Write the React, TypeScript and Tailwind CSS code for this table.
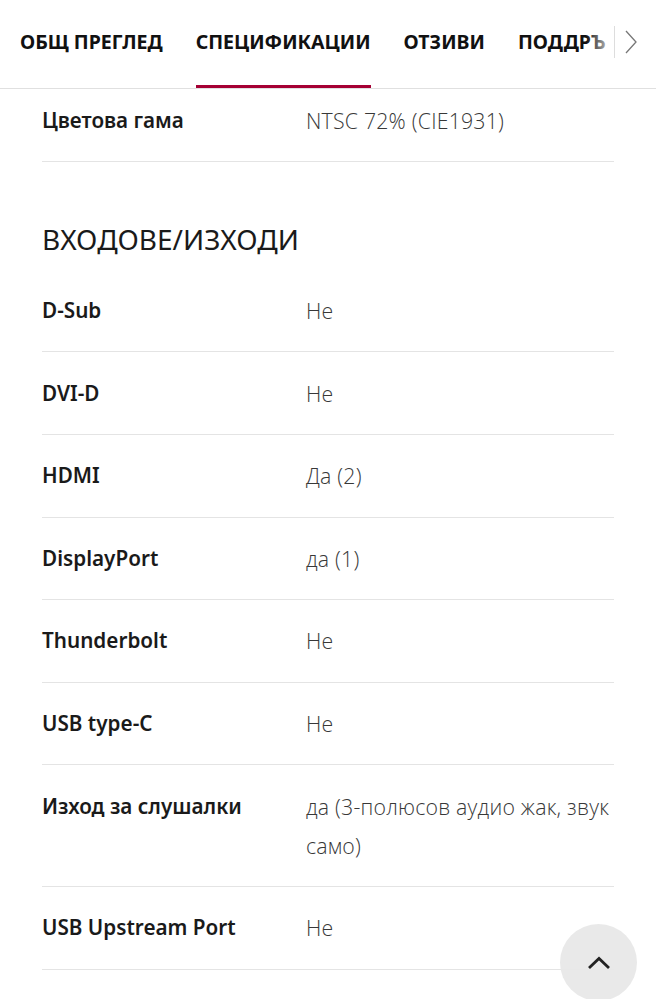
import React from "react";

const rows: [string, string][] = [
  ["D-Sub", "Не"],
  ["DVI-D", "Не"],
  ["HDMI", "Да (2)"],
  ["DisplayPort", "да (1)"],
  ["Thunderbolt", "Не"],
  ["USB type-C", "Не"],
  ["Изход за слушалки", "да (3-полюсов аудио жак, звук само)"],
  ["USB Upstream Port", "Не"],
];

function Row({ label, value, first }: { label: string; value: string; first?: boolean }) {
  return (
    <div
      className={`grid grid-cols-[264px_1fr] border-b border-[#e4e4e4] leading-[39px] ${
        first ? "pt-[11.5px] pb-[21.3px]" : "py-[21.3px]"
      }`}
    >
      <div className="font-semibold text-[20.7px] text-[#1a1a1a]">{label}</div>
      <div
        className="font-light text-[21.3px] text-[#383838] tracking-[0.2px]"
        style={{ fontFamily: '"Open Sans", "Noto Sans", sans-serif' }}
      >
        {value}
      </div>
    </div>
  );
}

export default function App() {
  return (
    <div
      className="w-[656px] h-[999px] bg-white overflow-hidden relative"
      style={{ fontFamily: '"Noto Sans", "Open Sans", sans-serif' }}
    >
      <div className="h-[89px] flex border-b border-[#e0e0e0] bg-white">
        <div className="relative flex-1 overflow-hidden">
          <div className="flex h-full pl-[20px] gap-[33px] whitespace-nowrap text-[19.5px] font-bold text-[#111]">
            <div className="h-full flex items-center pb-[4px]">ОБЩ ПРЕГЛЕД</div>
            <div className="h-full flex items-center pb-[4px] shadow-[inset_0_-3px_0_#a50034]">СПЕЦИФИКАЦИИ</div>
            <div className="h-full flex items-center pb-[4px]">ОТЗИВИ</div>
            <div className="h-full flex items-center pb-[4px]">ПОДДРЪ</div>
          </div>
          <div className="absolute right-0 top-0 h-full w-[28px] bg-gradient-to-r from-white/0 to-white/90" />
        </div>
        <div className="w-[42px] flex items-center">
          <div className="h-[32px] w-px bg-[#dddddd] -mt-[5px]" />
          <div className="flex-1 flex justify-start pl-[10px] -mt-[5px]">
            <svg width="12" height="24" viewBox="0 0 12 24" fill="none">
              <path d="M1 1 L11 12 L1 23" stroke="#777" strokeWidth="1.3" />
            </svg>
          </div>
        </div>
      </div>

      <div className="mx-[42px]">
        <Row label="Цветова гама" value="NTSC 72% (CIE1931)" first />
        <h2 className="pt-[59px] pb-[12px] text-[28px] leading-[37px] font-normal text-[#1a1a1a]">
          ВХОДОВЕ/ИЗХОДИ
        </h2>
        {rows.map(([l, v]) => (
          <Row key={l} label={l} value={v} />
        ))}
      </div>

      <button className="absolute left-[560px] top-[924px] w-[77px] h-[77px] rounded-full bg-[#e8e8e8]/95 flex items-center justify-center">
        <svg width="24" height="14" viewBox="0 0 24 14" fill="none">
          <path d="M2 12 L12 2.5 L22 12" stroke="#222" strokeWidth="2.8" />
        </svg>
      </button>
    </div>
  );
}
